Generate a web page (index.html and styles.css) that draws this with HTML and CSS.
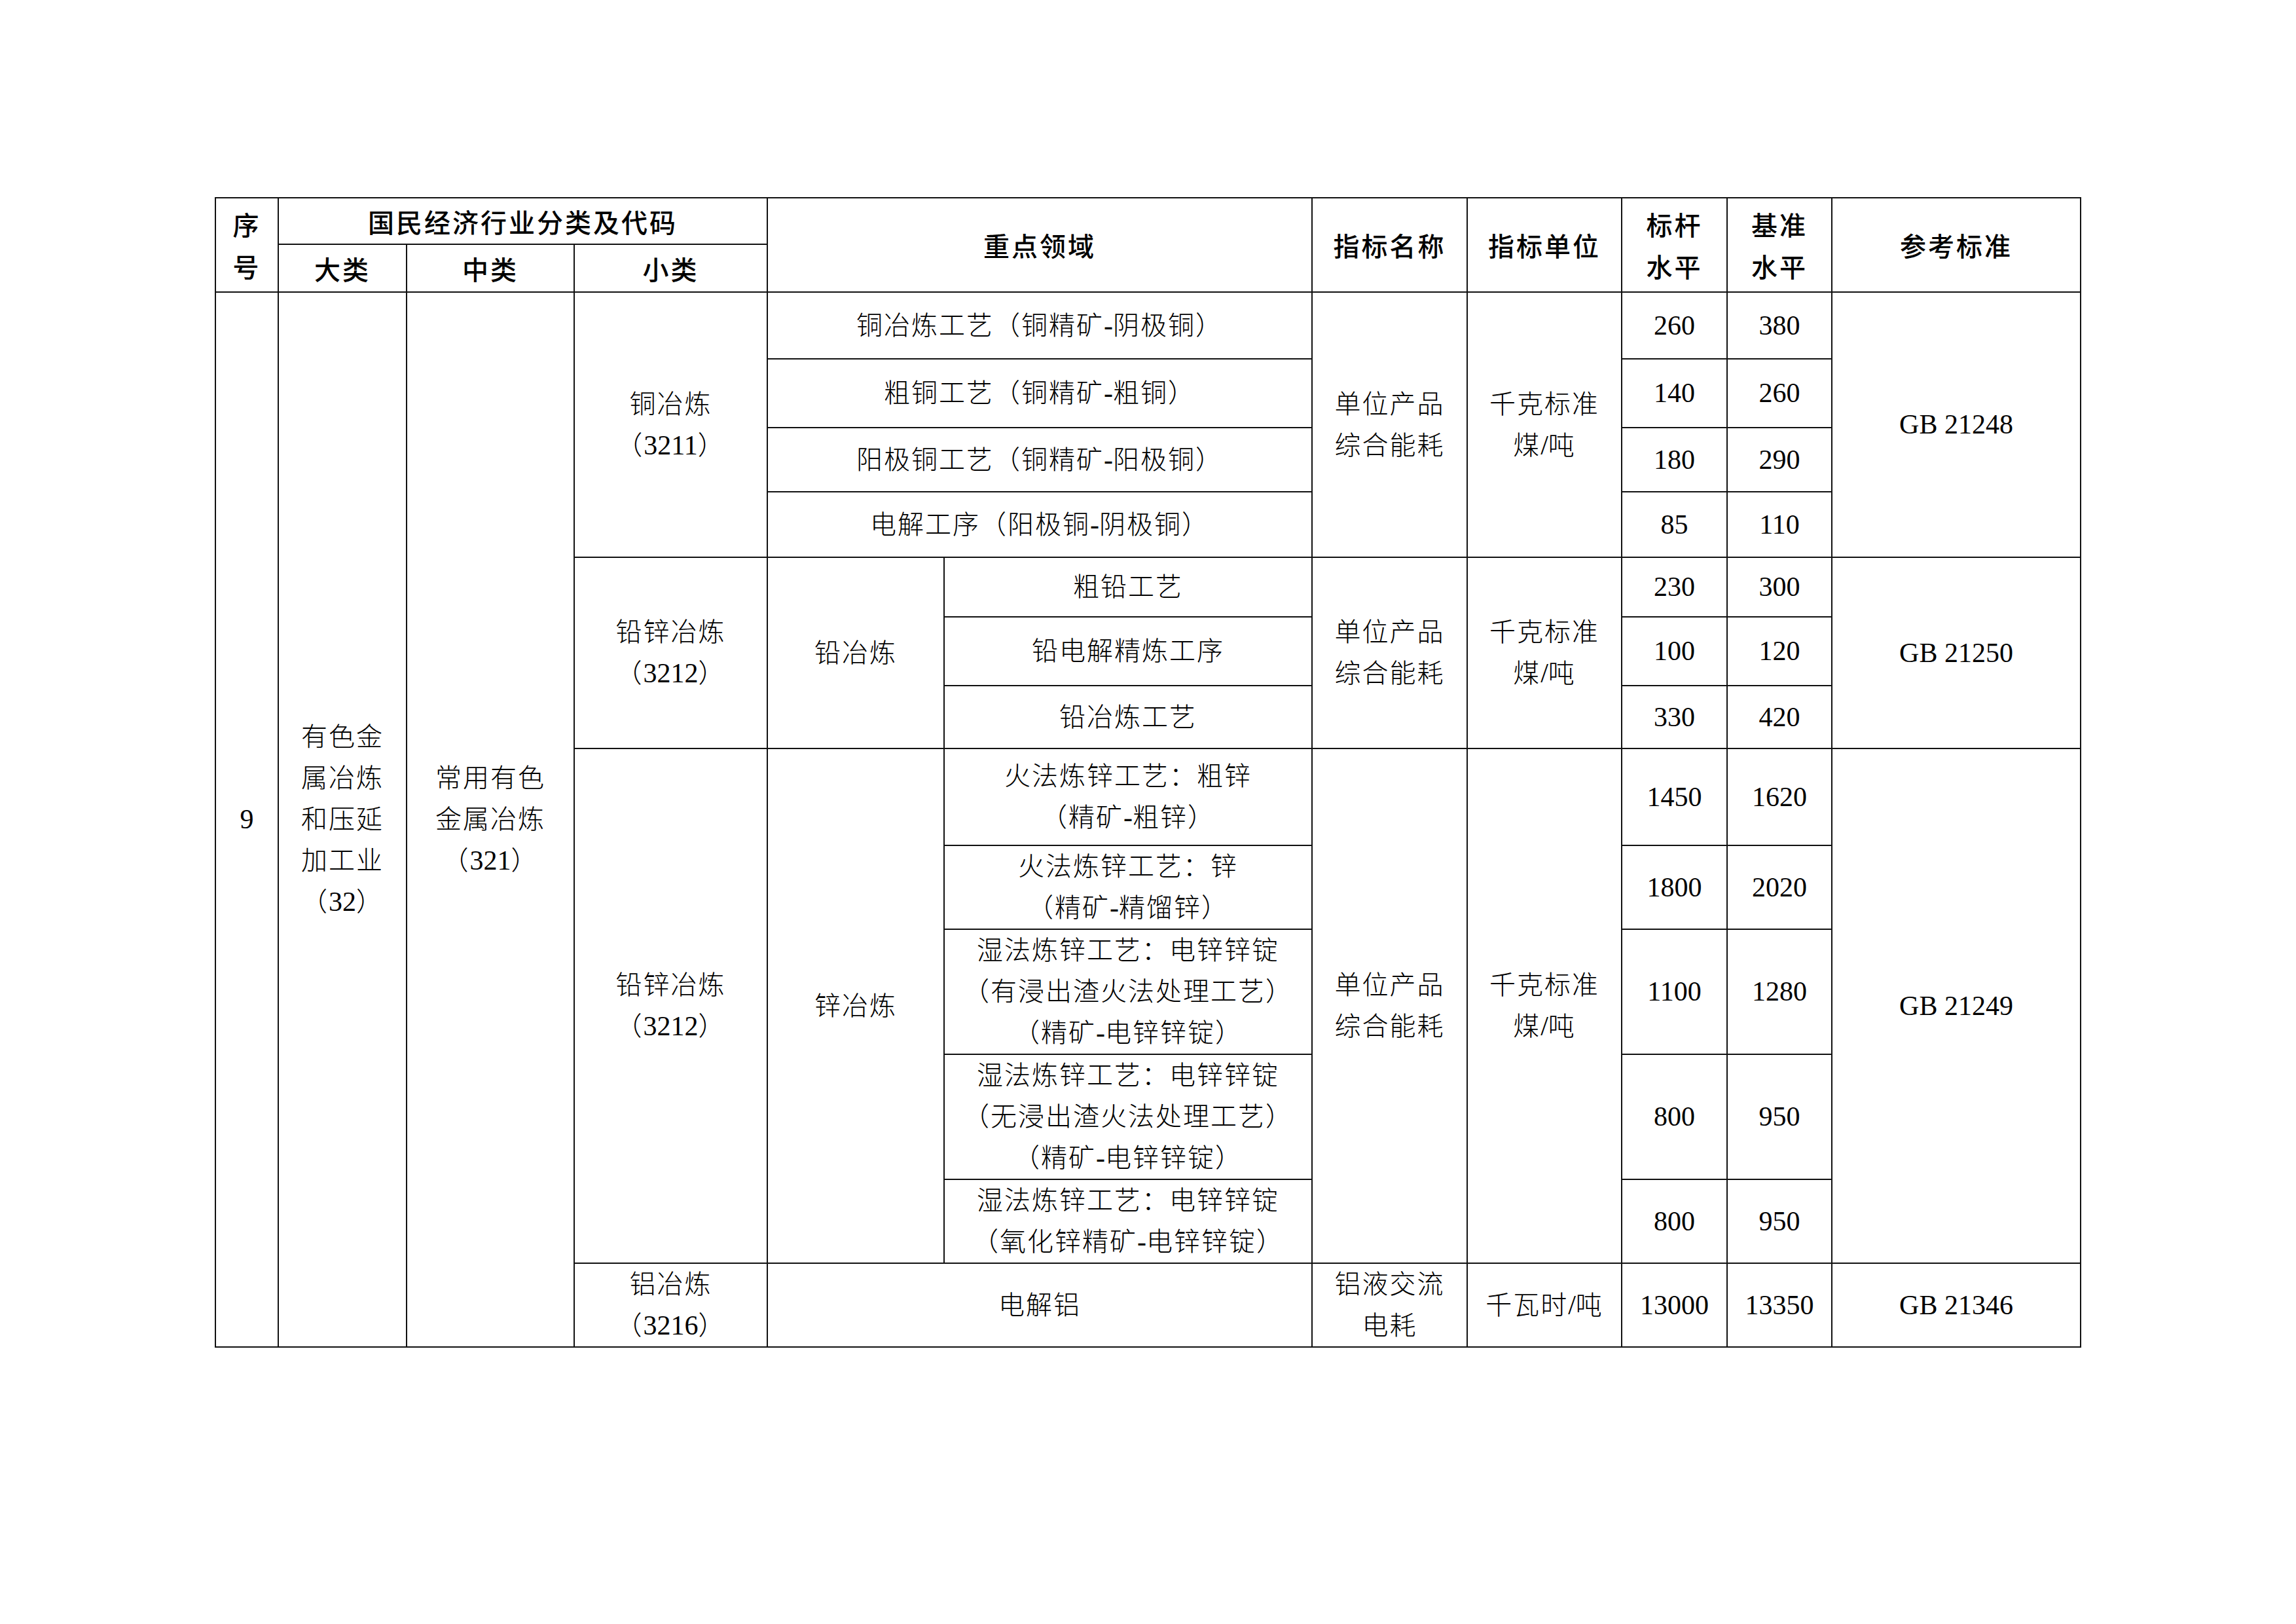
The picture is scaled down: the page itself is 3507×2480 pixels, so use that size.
FILE: index.html
```html
<!DOCTYPE html>
<html lang="zh-CN">
<head>
<meta charset="utf-8">
<title>有色金属冶炼能耗标杆水平与基准水平</title>
<link rel="stylesheet" href="styles.css">
</head>
<body>
<div class="page">
<table class="grid">
<colgroup>
<col class="c-seq"><col class="c-big"><col class="c-mid"><col class="c-small">
<col class="c-sub"><col class="c-field"><col class="c-name"><col class="c-unit">
<col class="c-bench"><col class="c-base"><col class="c-ref">
</colgroup>
<thead>
<tr class="h1">
<th rowspan="2">序<br>号</th>
<th colspan="3">国民经济行业分类及代码</th>
<th colspan="2" rowspan="2">重点领域</th>
<th rowspan="2">指标名称</th>
<th rowspan="2">指标单位</th>
<th rowspan="2">标杆<br>水平</th>
<th rowspan="2">基准<br>水平</th>
<th rowspan="2">参考标准</th>
</tr>
<tr class="h2">
<th>大类</th>
<th>中类</th>
<th>小类</th>
</tr>
</thead>
<tbody>
<tr class="r1">
<td rowspan="13" class="num">9</td>
<td rowspan="13">有色金<br>属冶炼<br>和压延<br>加工业<br>（<span class="d">32</span>）</td>
<td rowspan="13">常用有色<br>金属冶炼<br>（<span class="d">321</span>）</td>
<td rowspan="4">铜冶炼<br>（<span class="d">3211</span>）</td>
<td colspan="2">铜冶炼工艺（铜精矿<span class="d">-</span>阴极铜）</td>
<td rowspan="4">单位产品<br>综合能耗</td>
<td rowspan="4">千克标准<br>煤<span class="d">/</span>吨</td>
<td class="num">260</td>
<td class="num">380</td>
<td rowspan="4" class="num">GB 21248</td>
</tr>
<tr class="r2">
<td colspan="2">粗铜工艺（铜精矿<span class="d">-</span>粗铜）</td>
<td class="num">140</td>
<td class="num">260</td>
</tr>
<tr class="r3">
<td colspan="2">阳极铜工艺（铜精矿<span class="d">-</span>阳极铜）</td>
<td class="num">180</td>
<td class="num">290</td>
</tr>
<tr class="r4">
<td colspan="2">电解工序（阳极铜<span class="d">-</span>阴极铜）</td>
<td class="num">85</td>
<td class="num">110</td>
</tr>
<tr class="r5">
<td rowspan="3">铅锌冶炼<br>（<span class="d">3212</span>）</td>
<td rowspan="3">铅冶炼</td>
<td>粗铅工艺</td>
<td rowspan="3">单位产品<br>综合能耗</td>
<td rowspan="3">千克标准<br>煤<span class="d">/</span>吨</td>
<td class="num">230</td>
<td class="num">300</td>
<td rowspan="3" class="num">GB 21250</td>
</tr>
<tr class="r6">
<td>铅电解精炼工序</td>
<td class="num">100</td>
<td class="num">120</td>
</tr>
<tr class="r7">
<td>铅冶炼工艺</td>
<td class="num">330</td>
<td class="num">420</td>
</tr>
<tr class="r8">
<td rowspan="5">铅锌冶炼<br>（<span class="d">3212</span>）</td>
<td rowspan="5">锌冶炼</td>
<td>火法炼锌工艺：粗锌<br>（精矿<span class="d">-</span>粗锌）</td>
<td rowspan="5">单位产品<br>综合能耗</td>
<td rowspan="5">千克标准<br>煤<span class="d">/</span>吨</td>
<td class="num">1450</td>
<td class="num">1620</td>
<td rowspan="5" class="num">GB 21249</td>
</tr>
<tr class="r9">
<td>火法炼锌工艺：锌<br>（精矿<span class="d">-</span>精馏锌）</td>
<td class="num">1800</td>
<td class="num">2020</td>
</tr>
<tr class="r10">
<td>湿法炼锌工艺：电锌锌锭<br>（有浸出渣火法处理工艺）<br>（精矿<span class="d">-</span>电锌锌锭）</td>
<td class="num">1100</td>
<td class="num">1280</td>
</tr>
<tr class="r11">
<td>湿法炼锌工艺：电锌锌锭<br>（无浸出渣火法处理工艺）<br>（精矿<span class="d">-</span>电锌锌锭）</td>
<td class="num">800</td>
<td class="num">950</td>
</tr>
<tr class="r12">
<td>湿法炼锌工艺：电锌锌锭<br>（氧化锌精矿<span class="d">-</span>电锌锌锭）</td>
<td class="num">800</td>
<td class="num">950</td>
</tr>
<tr class="r13">
<td>铝冶炼<br>（<span class="d">3216</span>）</td>
<td colspan="2">电解铝</td>
<td>铝液交流<br>电耗</td>
<td>千瓦时<span class="d">/</span>吨</td>
<td class="num">13000</td>
<td class="num">13350</td>
<td class="num">GB 21346</td>
</tr>
</tbody>
</table>
</div>
</body>
</html>
```

FILE: styles.css
```css
html, body {
  margin: 0;
  padding: 0;
  background: #ffffff;
}

.page {
  padding: 301px 0 0 328px;
  width: 3507px;
  height: 2480px;
  box-sizing: border-box;
}

.grid {
  border-collapse: collapse;
  table-layout: fixed;
  width: 2850px;
  color: #000;
  border: 2px solid #111;
}

.c-seq { width: 96px; }
.c-big { width: 196px; }
.c-mid { width: 256px; }
.c-small { width: 295px; }
.c-sub { width: 270px; }
.c-field { width: 562px; }
.c-name { width: 237px; }
.c-unit { width: 236px; }
.c-bench { width: 161px; }
.c-base { width: 160px; }
.c-ref { width: 380px; }

.grid th,
.grid td {
  border: 2px solid #111;
  padding: 0 2px;
  text-align: center;
  vertical-align: middle;
  overflow: hidden;
}

.grid th {
  font-family: "Noto Sans CJK SC", "Noto Sans", sans-serif;
  font-weight: 500;
  font-size: 40px;
  letter-spacing: 3px;
  line-height: 64px;
}

.grid td {
  font-family: "Liberation Serif", "Noto Sans CJK SC", serif;
  font-weight: 300;
  font-size: 40px;
  letter-spacing: 2px;
  line-height: 63px;
}

.grid td .d {
  letter-spacing: 0;
  font-size: 42px;
}

.grid td.num {
  font-family: "Liberation Serif", serif;
  font-size: 42px;
  letter-spacing: 0;
}

.h1 { height: 71px; }
.h2 { height: 73px; }
.r1 { height: 102px; }
.r2 { height: 105px; }
.r3 { height: 98px; }
.r4 { height: 100px; }
.r5 { height: 91px; }
.r6 { height: 105px; }
.r7 { height: 96px; }
.r8 { height: 148px; }
.r9 { height: 126px; }
.r10 { height: 190px; }
.r11 { height: 190px; }
.r12 { height: 126px; }
.r13 { height: 128px; }
```
